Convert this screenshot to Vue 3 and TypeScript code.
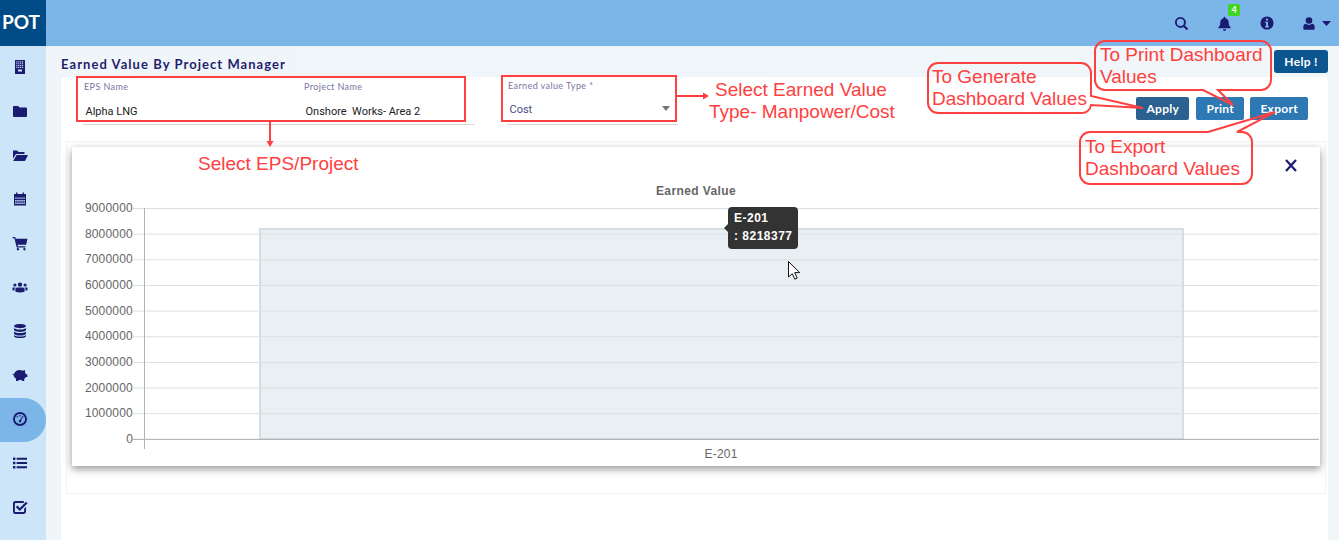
<script setup lang="ts">
import { computed } from 'vue'

const holes = (x0: number, y0: number, cols: number, rows: number, sx: number, sy: number, s: number): string => {
  let d = ''
  for (let r = 0; r < rows; r++) {
    for (let c = 0; c < cols; c++) {
      d += `M${x0 + c * sx} ${y0 + r * sy}h${s}v${s}h-${s}z`
    }
  }
  return d
}

const navIcons: string[] = [
  'M3 1h10v14H3z' + holes(4.3, 2.3, 4, 4, 1.9, 1.9, 1.1) + 'M6 10.4h4v2H6z',
  'M2 3h4.2l1.4 1.6H14a1 1 0 0 1 1 1V13a1 1 0 0 1-1 1H2a1 1 0 0 1-1-1V4a1 1 0 0 1 1-1z',
  'M1 3.5h4.2l1.4 1.4H12.5V7H4L1 11.5zM4.6 8H16l-3 6H1.2z',
  'M2 3h2V1.6h1.4V3h5.2V1.6H12V3h2v11.5H2z' + holes(3.2, 6.4, 5, 3, 2.05, 2.6, 1.4),
  'M.6 2h2.6l.5 1.8H15.4l-1.2 6H5.6l.3 1.4H13.4v1.2H4.7L2.4 3.2H.6zM5.9 13a1.2 1.2 0 1 0 .01 0zM12.4 13a1.2 1.2 0 1 0 .01 0z',
  'M8 3.4a2.2 2.2 0 1 1 0 4.4 2.2 2.2 0 0 1 0-4.4zM2.9 4.4a1.6 1.6 0 1 1 0 3.2 1.6 1.6 0 0 1 0-3.2zM13.1 4.4a1.6 1.6 0 1 1 0 3.2 1.6 1.6 0 0 1 0-3.2zM5 8.6h6c1 0 1.6.8 1.6 1.8v2.4c-3 1-6.2 1-9.2 0v-2.4C3.4 9.4 4 8.6 5 8.6zM.5 8.6h2.9c-.6.5-.9 1.1-.9 1.9v.9H.5zM12.6 8.6h2.9v2.8h-2c0-1.4-.1-2.1-.9-2.8z',
  'M8 1c3.3 0 6 .9 6 2.1S11.3 5.2 8 5.2 2 4.3 2 3.1 4.7 1 8 1zM2 4.9C3 5.9 5.4 6.4 8 6.4s5-.5 6-1.5v1.9c0 1.2-2.7 2.1-6 2.1S2 8 2 6.8zM2 8.5c1 1 3.4 1.5 6 1.5s5-.5 6-1.5v1.9c0 1.2-2.7 2.1-6 2.1s-6-.9-6-2.1zM2 12.1c1 1 3.4 1.5 6 1.5s5-.5 6-1.5v.8c0 1.2-2.7 2.1-6 2.1s-6-.9-6-2.1z',
  'M7.5 3c1.2 0 2.3.3 3.2.8L13 3v2.6c.6.6 1 1.2 1.2 1.9h1.2V10h-1.5c-.4.8-1 1.4-1.7 1.9V14h-2.4v-1.2c-1.6.3-2.6.3-3.4.1V14H4v-2.4C2.600 10.800 1.800 9.600 1.700 8.200.9 8 .4 7.300.6 6.400c.5.700 1 .9 1.400.700C3 4.500 5 3 7.500 3z',
  'M8 1a7 7 0 1 0 0 14A7 7 0 1 0 8 1zM8 2.900a5.100 5.100 0 1 1 0 10.200A5.100 5.100 0 1 1 8 2.900zM7.400 4h1.200v1.400H7.400zM4.300 5.600l1-.7.800 1.100-1 .7zM11.700 5.600l-1-.7-.8 1.100 1 .7zM9.900 5.700l.9.5-1.700 3a1.300 1.300 0 1 1-1-.5z',
  'M1 2.600h2.400V5H1zM4.600 2.800H15v2H4.600zM1 6.800h2.400v2.400H1zM4.600 7h10.400v2H4.600zM1 11h2.400v2.400H1zM4.600 11.200H15v2H4.600z',
  'M3.500 2h8.300v1.900H3.800c-.6 0-.9.300-.9.900v7.400c0 .6.300.9.900.9h7.400c.6 0 .9-.3.9-.9V9.700l1.900-1.900v4.700c0 1.400-1.100 2.500-2.500 2.500H3.500A2.500 2.500 0 0 1 1 12.500v-8A2.500 2.500 0 0 1 3.500 2zM14 2.700l1.600 1.600-7.800 7.800-4-4L5.400 6.500l2.400 2.400z'
]
const activeNav = 8

const yLabels: number[] = [9000000, 8000000, 7000000, 6000000, 5000000, 4000000, 3000000, 2000000, 1000000, 0]
const gridRows = computed(() => yLabels.map((value, i) => ({ value, y: 208.5 + i * 25.65 })))
</script>

<template>
  <div class="page">
    <header class="topbar">
      <div class="logo">POT</div>
      <div class="actions">
        <div class="action">
          <svg width="15" height="15" viewBox="0 0 16 16"><path class="ic" fill-rule="evenodd" d="M6.800 1a5.800 5.800 0 1 0 3.300 10.600l3.600 3.500 1.500-1.500-3.500-3.600A5.800 5.800 0 0 0 6.800 1zm0 2a3.800 3.800 0 1 1 0 7.600 3.800 3.800 0 0 1 0-7.600z"/></svg>
        </div>
        <div class="action">
          <svg width="15" height="15" viewBox="0 0 16 16"><path class="ic" d="M8 .8c.6 0 1 .4 1 1v.5c2.200.5 3.500 2.200 3.500 4.700 0 2.700.9 3.900 2 5v1H1.500v-1c1.100-1.100 2-2.300 2-5 0-2.500 1.300-4.200 3.500-4.700v-.5c0-.6.400-1 1-1zM6.300 14.200h3.400a1.700 1.700 0 0 1-3.400 0z"/></svg>
          <span class="badge">4</span>
        </div>
        <div class="action">
          <svg width="14" height="14" viewBox="0 0 16 16"><path class="ic" fill-rule="evenodd" d="M8 .5a7.500 7.500 0 1 0 0 15 7.500 7.500 0 0 0 0-15zM6.800 3h2.400v2.200H6.800zM5.900 6.500h3.300v5h1v1.500H5.900v-1.500h1V8H5.900z"/></svg>
        </div>
        <div class="action user">
          <svg width="14" height="15" viewBox="0 0 16 16"><path class="ic" d="M8 .8a3.800 3.800 0 1 1 0 7.600A3.800 3.800 0 0 1 8 .8zM4.500 8.400c1 .8 2.200 1.200 3.500 1.200s2.500-.4 3.500-1.200c2 .2 3 1.600 3 3.900v1.400c0 .9-.7 1.500-1.500 1.500H3c-.8 0-1.500-.6-1.500-1.500v-1.400c0-2.300 1-3.700 3-3.900z"/></svg>
          <svg width="9" height="5" viewBox="0 0 9 5"><path class="ic" d="M0 0h9L4.500 5z"/></svg>
        </div>
      </div>
    </header>

    <div class="body">
      <nav class="sidebar">
        <div v-for="(d, i) in navIcons" :key="i" class="nav-item" :class="{ active: i === activeNav }">
          <svg width="16" height="16" viewBox="0 0 16 16"><path class="ic" fill-rule="evenodd" :d="d"/></svg>
        </div>
      </nav>

      <main class="main">
        <div class="title-row">
          <h1 class="title">Earned Value By Project Manager</h1>
          <button class="btn help">Help !</button>
        </div>

        <section class="panel">
          <div class="filters">
            <div class="field-group">
              <div class="field eps">
                <label>EPS Name</label>
                <div class="value">Alpha LNG</div>
              </div>
              <div class="field">
                <label>Project Name</label>
                <div class="value">Onshore&nbsp; Works- Area 2</div>
              </div>
            </div>
            <div class="field-group type">
              <div class="field">
                <label>Earned value Type *</label>
                <div class="value select">Cost<span class="caret"></span></div>
              </div>
            </div>
            <div class="buttons">
              <button class="btn apply">Apply</button>
              <button class="btn print">Print</button>
              <button class="btn">Export</button>
            </div>
          </div>

          <div class="chart-box">
            <div class="chart-card">
              <svg class="chart" width="1248" height="319" viewBox="72 147 1248 319">
                <text x="696" y="195" class="chart-title" text-anchor="middle">Earned Value</text>
                <rect x="260" y="229" width="923" height="210" fill="#e8f0f3" stroke="#d3dfe4" stroke-width="2"/>
                <g v-for="row in gridRows" :key="row.value">
                  <line x1="133" x2="1319" :y1="row.y" :y2="row.y" :stroke="row.value === 0 ? '#aaaaaa' : '#dcdfe1'" stroke-width="1"/>
                  <text x="133" :y="row.y + 3.500" class="axis" text-anchor="end">{{ row.value }}</text>
                </g>
                <line x1="144.500" x2="144.500" y1="208" y2="449" stroke="#b3b3b3"/>
                <text x="721" y="458" class="axis" text-anchor="middle">E-201</text>
                <path d="M1286 160l10 11M1296 160l-10 11" stroke="#1b1b72" stroke-width="2.200" fill="none"/>
              </svg>
              <div class="tooltip">E-201<br>: 8218377</div>
            </div>
          </div>
        </section>
      </main>
    </div>

    <svg class="notes" width="1339" height="540" viewBox="0 0 1339 540">
      <path class="cursor" d="M788.500 261.500v15.500l3.800-3.300 2.500 5.500 2.400-1.100-2.500-5.500h5z"/>
      <g class="red-line">
        <rect x="77" y="77" width="388" height="44"/>
        <rect x="502" y="76" width="174" height="45"/>
        <path d="M270 121v21"/>
        <path d="M676 96h28"/>
        <path d="M1105 41h156a10 10 0 0 1 10 10v29a10 10 0 0 1-10 10h-43l15 15-30-15h-98a10 10 0 0 1-10-10V51a10 10 0 0 1 10-10z"/>
        <path d="M938 63h143a10 10 0 0 1 10 10v23l52 12-52-3a9 9 0 0 1-10 8H938a10 10 0 0 1-10-10V73a10 10 0 0 1 10-10z"/>
        <path d="M1090 132h118l67-20-38 20h5a10 10 0 0 1 10 10v32a10 10 0 0 1-10 10H1090a10 10 0 0 1-10-10v-32a10 10 0 0 1 10-10z"/>
      </g>
      <path class="red-fill" d="M266.500 141h7l-3.500 6zM703 92.500l6 3.500-6 3.500z"/>
      <text x="198" y="170" class="note">Select EPS/Project</text>
      <text x="715" y="96" class="note">Select Earned Value</text>
      <text x="709" y="118" class="note">Type- Manpower/Cost</text>
      <text x="932" y="83" class="note">To Generate</text>
      <text x="932" y="105" class="note">Dashboard Values</text>
      <text x="1100" y="61" class="note">To Print Dashboard</text>
      <text x="1100" y="83" class="note">Values</text>
      <text x="1085" y="153" class="note">To Export</text>
      <text x="1085" y="175" class="note">Dashboard Values</text>
    </svg>
  </div>
</template>

<style scoped>
.page {
  position: relative;
  width: 1339px;
  height: 540px;
  overflow: hidden;
  font-family: Lato, "Liberation Sans", sans-serif;
  background: #f1f6f9;
}
.topbar {
  display: flex;
  align-items: center;
  justify-content: space-between;
  height: 46px;
  background: #7cb6e8;
}
.logo {
  display: flex;
  align-items: center;
  justify-content: center;
  box-sizing: border-box;
  width: 46px;
  height: 46px;
  padding: 0 4px 3px 0;
  background: #004b85;
  color: #ffffff;
  font-size: 19px;
  font-weight: 700;
}
.actions {
  display: flex;
  align-items: center;
  padding-right: 6px;
}
.action {
  position: relative;
  display: flex;
  align-items: center;
  justify-content: center;
  width: 42.500px;
  height: 24px;
}
.action.user {
  gap: 6px;
  width: 34px;
  margin-left: 11px;
}
.ic {
  fill: #1b1b72;
}
.badge {
  position: absolute;
  left: 25px;
  top: -7px;
  width: 12px;
  height: 12px;
  border-radius: 2px;
  background: #3ed61e;
  color: #ffffff;
  font-size: 9px;
  font-weight: 700;
  line-height: 12px;
  text-align: center;
}
.body {
  display: flex;
  height: 494px;
}
.sidebar {
  flex: none;
  width: 46px;
  background: #cce5f8;
}
.nav-item {
  display: flex;
  align-items: center;
  justify-content: center;
  box-sizing: border-box;
  height: 44px;
  padding: 0 6px 2px 0;
}
.nav-item.active {
  background: #7cb6e8;
  border-radius: 0 22px 22px 0;
}
.main {
  flex: 1;
  min-width: 0;
  padding: 0 11px 0 15px;
  background: linear-gradient(90deg, #eff5f9 0, #f1f6f9 100%);
}
.title-row {
  display: flex;
  align-items: flex-start;
  justify-content: space-between;
  height: 31px;
}
.title {
  margin: 10px 0 0;
  color: #1f1f6e;
  font-size: 13px;
  font-weight: 700;
  letter-spacing: 1.050px;
  line-height: 16px;
}
.panel {
  height: 463px;
  background: #ffffff;
  border-radius: 4px 4px 0 0;
}
.filters {
  display: flex;
  height: 64px;
  padding: 0 20px 0 22px;
}
.field-group {
  display: flex;
  flex: none;
  width: 391px;
  height: 47px;
  border-bottom: 1px solid #d6d6d6;
}
.field-group.type {
  width: 171px;
  margin-left: 33px;
}
.field {
  flex: 1;
  min-width: 0;
  padding-top: 4px;
}
.field.eps {
  flex: none;
  width: 220px;
}
.field label {
  display: block;
  padding-left: 1px;
  color: #77759f;
  font-size: 9px;
  line-height: 11px;
  letter-spacing: 0.4px;
}
.type .field {
  padding-top: 3px;
}
.value {
  display: flex;
  align-items: center;
  margin-top: 13px;
  padding-left: 2.500px;
  color: #222222;
  font-family: Roboto, "Liberation Sans", sans-serif;
  font-size: 11px;
  line-height: 14px;
}
.type .value {
  margin-top: 12px;
  color: #4b4b85;
}
.caret {
  margin-left: auto;
  margin-right: 8px;
  margin-bottom: 4px;
  border-left: 4.500px solid transparent;
  border-right: 4.500px solid transparent;
  border-top: 5px solid #777777;
}
.buttons {
  display: flex;
  align-items: flex-start;
  gap: 6px;
  margin-left: auto;
  padding-top: 20px;
}
.btn {
  height: 23px;
  padding: 0 10px;
  border: 0;
  border-radius: 2px;
  background: #2e78b4;
  color: #ffffff;
  font-family: Lato, "Liberation Sans", sans-serif;
  font-size: 12px;
  font-weight: 700;
  letter-spacing: 0.3px;
}
.btn.apply {
  min-width: 53px;
  background: #2a6190;
  margin-right: 1px;
}
.btn.print {
  min-width: 48px;
}
.btn.help {
  width: 54px;
  margin-top: 4px;
  padding: 0;
  border-radius: 3px;
  background: #0b5590;
}
.chart-box {
  box-sizing: border-box;
  height: 353px;
  margin: 0 2px 0 5px;
  padding: 5px 5px 0;
  border: 1px solid #f1f3f4;
}
.chart-card {
  position: relative;
  width: 1248px;
  height: 319px;
  background: #ffffff;
  box-shadow: 0 3px 8px rgba(0, 0, 0, 0.42);
}
.chart {
  display: block;
}
.chart-title {
  fill: #666666;
  font-family: "Liberation Sans", sans-serif;
  font-size: 12px;
  font-weight: 700;
  letter-spacing: 0.4px;
}
.axis {
  fill: #666666;
  font-family: "Liberation Sans", sans-serif;
  font-size: 12px;
  letter-spacing: 0.2px;
}
.tooltip {
  position: absolute;
  left: 656px;
  top: 60px;
  width: 70px;
  height: 42px;
  padding: 2px 0 0 6px;
  box-sizing: border-box;
  border-radius: 4px;
  background: #333333;
  color: #ffffff;
  font-family: "Liberation Sans", sans-serif;
  font-size: 12px;
  font-weight: 700;
  line-height: 18px;
  letter-spacing: 0.5px;
}
.tooltip::before {
  content: "";
  position: absolute;
  left: -4px;
  top: 17px;
  border-top: 4px solid transparent;
  border-bottom: 4px solid transparent;
  border-right: 4px solid #333333;
}
.notes {
  position: absolute;
  left: 0;
  top: 0;
  pointer-events: none;
}
.cursor {
  fill: #ffffff;
  stroke: #111111;
  stroke-width: 1;
}
.red-line rect,
.red-line path {
  fill: none;
  stroke: #ff4040;
  stroke-width: 2;
}
.red-fill {
  fill: #ff4040;
}
.note {
  fill: #ff4040;
  font-family: "Liberation Sans", sans-serif;
  font-size: 19px;
}
</style>
